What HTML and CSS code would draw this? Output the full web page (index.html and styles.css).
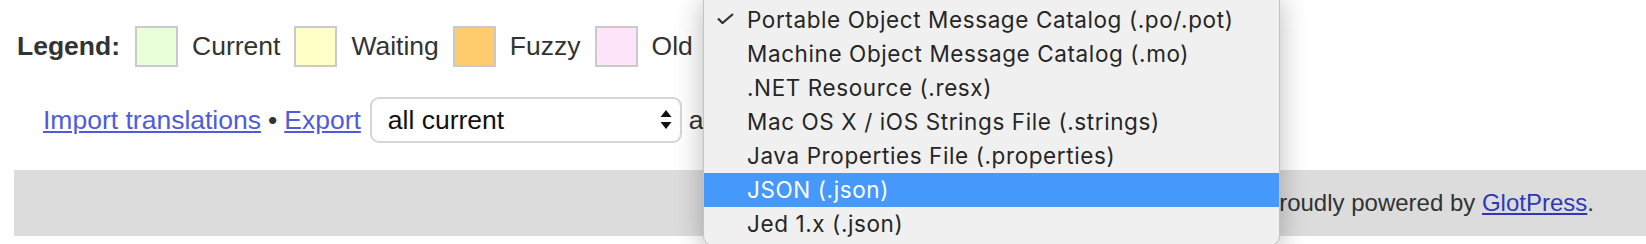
FILE: index.html
```html
<!DOCTYPE html>
<html lang="en">
<head>
    <meta charset="UTF-8">
    <title>Export translations</title>
    <link rel="stylesheet" href="styles.css">
</head>
<body>
    <div class="page">
        <!-- Status legend -->
        <div class="legend">
            <strong>Legend:</strong>
            <span class="box status-current"></span>
            <span>Current</span>
            <span class="box status-waiting"></span>
            <span>Waiting</span>
            <span class="box status-fuzzy"></span>
            <span>Fuzzy</span>
            <span class="box status-old"></span>
            <span>Old</span>
        </div>

        <!-- Import / export -->
        <div class="actions">
            <a href="#">Import translations</a>
            <span class="sep">&bull;</span>
            <a href="#">Export</a>
            <div class="select">
                <span>all current</span>
                <svg class="arrows" width="12" height="20" viewBox="0 0 12 20">
                    <polygon points="6,0 11.5,7 0.5,7" fill="#111"/>
                    <polygon points="0.5,12 11.5,12 6,19" fill="#111"/>
                </svg>
            </div>
            <span>as</span>
        </div>
    </div>

    <footer class="footer">
        <p>Proudly powered by <a href="#">GlotPress</a>.</p>
    </footer>

    <!-- Open format dropdown -->
    <ul class="menu">
        <li class="checked">
            <svg class="check" width="17" height="11" viewBox="0 0 17 11">
                <polyline points="1,5.5 5.5,10 16,1" fill="none" stroke="#333" stroke-width="2.2"/>
            </svg>
            Portable Object Message Catalog (.po/.pot)
        </li>
        <li>Machine Object Message Catalog (.mo)</li>
        <li>.NET Resource (.resx)</li>
        <li>Mac OS X / iOS Strings File (.strings)</li>
        <li>Java Properties File (.properties)</li>
        <li class="active">JSON (.json)</li>
        <li>Jed 1.x (.json)</li>
    </ul>
</body>
</html>
```

FILE: styles.css
```css
* {
    margin: 0;
    padding: 0;
    box-sizing: border-box;
}

body {
    font-family: "Liberation Sans", Arial, sans-serif;
    font-size: 26.5px;
    color: #333;
    background-color: #fff;
    overflow: hidden;
}

a {
    color: #4f5bdc;
}

.page {
    padding: 26px 0 0 17px;
}

.legend {
    display: flex;
    align-items: center;
    gap: 14px;
    height: 41px;
}

.legend strong {
    margin-right: 1px;
}

.box {
    display: block;
    flex: none;
    width: 43px;
    height: 41px;
    border: 2px solid #cacaca;
}

.status-current { background-color: #e9ffd9; }
.status-waiting { background-color: #ffffc6; }
.status-fuzzy { background-color: #ffcc6d; }
.status-old { background-color: #fee4f8; }

.actions {
    display: flex;
    align-items: center;
    gap: 7px;
    height: 46px;
    margin-top: 30px;
    padding-left: 26px;
}

.sep {
    color: #333;
}

.select {
    display: flex;
    align-items: center;
    justify-content: space-between;
    flex: none;
    width: 312px;
    height: 46px;
    margin-left: 2px;
    padding: 0 8px 0 16px;
    border: 2px solid #d6d6d6;
    border-radius: 9px;
    color: #111;
    background-color: #fff;
}

.footer {
    margin: 27px 0 0 14px;
    height: 66px;
    padding-right: 52px;
    display: flex;
    align-items: center;
    justify-content: flex-end;
    background-color: #dcdcdc;
    font-size: 24px;
}

.footer a {
    color: #2f39b6;
}

.menu {
    position: absolute;
    left: 703px;
    top: -6px;
    width: 577px;
    padding: 8px 0 4px;
    list-style: none;
    background-color: #f0f0f0;
    border: 1px solid #c4c4c4;
    border-radius: 0 0 10px 10px;
    box-shadow: 0 6px 28px rgba(0, 0, 0, 0.28);
    font-family: Inter, "Liberation Sans", sans-serif;
    font-size: 22.5px;
    letter-spacing: 0.6px;
    color: #262626;
}

.menu li {
    position: relative;
    height: 34px;
    line-height: 34px;
    padding-left: 43px;
}

.menu li.active {
    background-color: #4599fa;
    color: #fff;
}

.check {
    position: absolute;
    left: 13px;
    top: 10px;
}
```
